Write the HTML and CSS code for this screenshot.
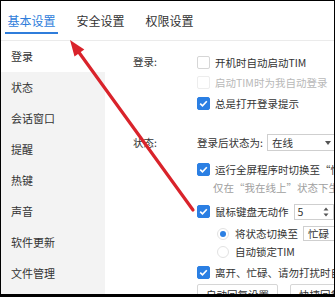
FILE: index.html
```html
<!DOCTYPE html>
<html lang="zh-CN">
<head>
  <meta charset="UTF-8">
  <meta name="viewport" content="width=device-width, initial-scale=1.0">
  <title>基本设置</title>
  <link rel="stylesheet" href="styles.css">
</head>
<body>

  <div class="window">
    <div class="tabs">
      <div class="tab active">基本设置</div>
      <div class="tab">安全设置</div>
      <div class="tab">权限设置</div>
    </div>

    <div class="main">
      <ul class="sidebar">
        <li class="active">登录</li>
        <li>状态</li>
        <li>会话窗口</li>
        <li>提醒</li>
        <li>热键</li>
        <li>声音</li>
        <li>软件更新</li>
        <li>文件管理</li>
      </ul>

      <div class="content">
        <!-- 登录 -->
        <div class="section section-login">
          <div class="label">登录:</div>
          <div class="options">
            <div class="row"><span class="check"></span>开机时自动启动TIM</div>
            <div class="row disabled"><span class="check"></span>启动TIM时为我自动登录</div>
            <div class="row"><span class="check on"></span>总是打开登录提示</div>
          </div>
        </div>

        <!-- 状态 -->
        <div class="section section-status">
          <div class="label label-tall">状态:</div>
          <div class="options">
            <div class="row row-select">
              登录后状态为:
              <span class="select">在线<i class="caret"></i></span>
            </div>
            <div class="row row-gap"><span class="check on"></span>运行全屏程序时切换至“忙碌”</div>
            <div class="row hint">仅在“我在线上”状态下生效</div>
            <div class="row row-gap">
              <span class="check on"></span>鼠标键盘无动作
              <span class="spin">5
                <svg class="spin-arrows" width="6" height="10" viewBox="0 0 6 10">
                  <path d="M3 0.5 L5.5 3.5 L0.5 3.5 Z" fill="#555"/>
                  <path d="M3 9.5 L5.5 6.5 L0.5 6.5 Z" fill="#555"/>
                </svg>
              </span>
            </div>
            <div class="row sub sub-first"><span class="radio on"></span>将状态切换至 <span class="select select-small">忙碌</span></div>
            <div class="row sub"><span class="radio"></span>自动锁定TIM</div>
            <div class="row row-away"><span class="check on"></span>离开、忙碌、请勿打扰时自动回复</div>
            <div class="buttons">
              <button>自动回复设置</button>
              <button>快捷回复设置</button>
            </div>
          </div>
        </div>
      </div>
    </div>

    <svg class="arrow" width="333" height="293" viewBox="0 0 333 293">
      <line x1="192" y1="209" x2="78.4" y2="52" stroke="#d9232b" stroke-width="3.2" stroke-linecap="round"/>
      <polygon points="69,39 73.5,55.5 83.3,48.5" fill="#d9232b"/>
    </svg>
  </div>

</body>
</html>
```

FILE: styles.css
```css
/* Common styles */
body {
  margin: 0;
  background-color: #000;
  font-family: "Noto Sans CJK SC", "Microsoft YaHei", sans-serif;
  color: #333;
}

.window {
  position: relative;
  width: 333px;
  height: 293px;
  margin: 1px 1px 3px 1px;
  background-color: #fff;
  overflow: hidden;
  display: flex;
  flex-direction: column;
}

/* Tabs */
.tabs {
  display: flex;
  gap: 16px;
  height: 39px;
  padding-left: 4px;
  border-bottom: 1px solid #ebebeb;
  flex: none;
}

.tab {
  padding: 11px 2.5px 1px;
  line-height: 18px;
  font-size: 12px;
  box-sizing: border-box;
  height: 33px;
  border-bottom: 2px solid transparent;
}

.tab.active {
  color: #2f7ddb;
  border-bottom-color: #2f7ddb;
}

/* Layout */
.main {
  display: flex;
  flex: 1;
  min-height: 0;
}

.sidebar {
  list-style: none;
  margin: 0;
  padding: 0;
  width: 104px;
  flex: none;
  background-color: #f3f3f3;
}

.sidebar li {
  height: 31px;
  line-height: 31px;
  padding-left: 10px;
  font-size: 11px;
}

.sidebar li.active {
  background-color: #fff;
}

.content {
  flex: 1;
  overflow: hidden;
  padding: 11px 0 0 28px;
}

.section {
  display: flex;
}

.section-status {
  margin-top: 17px;
}

.label {
  width: 64px;
  flex: none;
  height: 20.5px;
  line-height: 20.5px;
  font-size: 10.5px;
}

.label-tall {
  height: 24px;
  line-height: 24px;
}

.options {
  flex: none;
  white-space: nowrap;
}

/* Rows */
.row {
  display: flex;
  align-items: center;
  height: 20.5px;
  font-size: 10.5px;
}

.section-status .row {
  height: 18px;
}

.section-status .row-select {
  height: 24px;
}

.row-gap {
  margin-top: 6px;
}

.sub {
  padding-left: 20px;
}

.sub-first {
  margin-top: 4px;
}

.row-away {
  margin-top: 3px;
}

.row.disabled {
  color: #b8b8b8;
}

.hint {
  padding-left: 16px;
  color: #a0a0a0;
}

/* Controls */
.check {
  width: 13px;
  height: 13px;
  box-sizing: border-box;
  border: 1px solid #d6d6d6;
  border-radius: 2px;
  background-color: #fff;
  margin-right: 5px;
  flex: none;
}

.disabled .check {
  border-color: #ededed;
}

.check.on {
  border-color: #2b7fe3;
  background: #2b7fe3 url("data:image/svg+xml;utf8,<svg xmlns='http://www.w3.org/2000/svg' width='11' height='11' viewBox='0 0 11 11'><polyline points='2.2,5.6 4.5,7.9 8.8,3.2' fill='none' stroke='white' stroke-width='1.6'/></svg>") center no-repeat;
}

.radio {
  width: 12px;
  height: 12px;
  box-sizing: border-box;
  border: 1px solid #e2e2e2;
  border-radius: 50%;
  margin-right: 6px;
  flex: none;
  position: relative;
}

.radio.on::after {
  content: "";
  position: absolute;
  left: 2px;
  top: 2px;
  width: 6px;
  height: 6px;
  border-radius: 50%;
  background-color: #2b7fe3;
}

.select {
  display: inline-flex;
  align-items: center;
  justify-content: space-between;
  width: 69px;
  height: 17px;
  box-sizing: border-box;
  border: 1px solid #cfcfcf;
  padding: 0 4px;
  margin-left: 4px;
}

.caret {
  width: 0;
  height: 0;
  border-left: 3px solid transparent;
  border-right: 3px solid transparent;
  border-top: 4px solid #555;
}

.select-small {
  width: 50px;
  height: 15px;
  margin-left: 5px;
}

.spin {
  display: inline-flex;
  align-items: center;
  justify-content: space-between;
  width: 40px;
  height: 16px;
  box-sizing: border-box;
  border: 1px solid #cfcfcf;
  padding: 0 4px 0 3px;
  margin-left: 5px;
}

.buttons {
  display: flex;
  gap: 12px;
  margin-top: 2px;
}

.buttons button {
  font-family: inherit;
  font-size: 10.5px;
  color: #333;
  height: 22px;
  padding: 0 8px;
  background-color: #fff;
  border: 1px solid #d6d6d6;
  border-radius: 2px;
}

/* Arrow overlay */
.arrow {
  position: absolute;
  left: 0;
  top: 0;
  pointer-events: none;
}
```
